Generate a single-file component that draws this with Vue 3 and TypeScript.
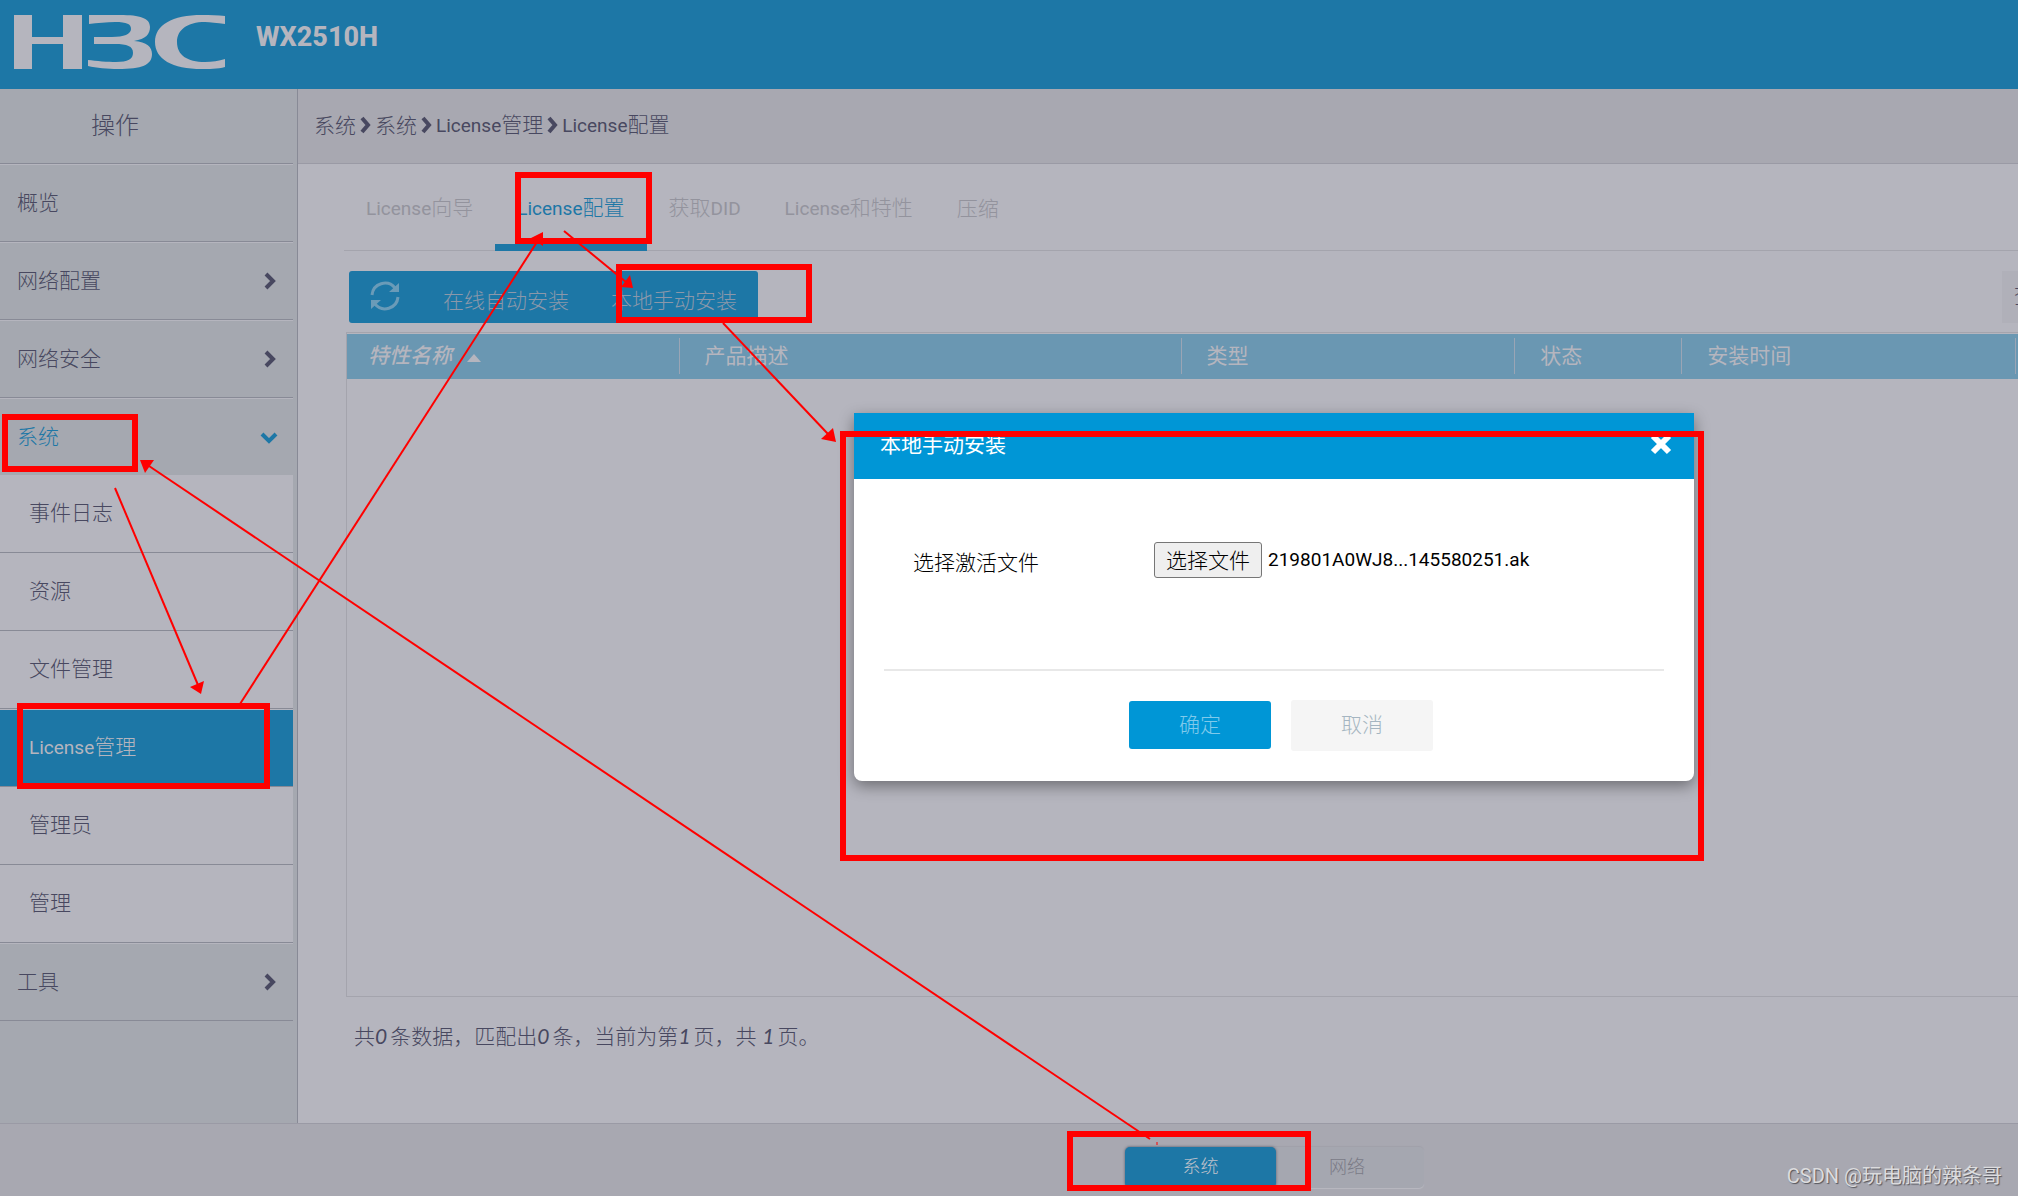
<script setup lang="ts">
import { ref } from 'vue'

interface TextRun {
  text: string
  latin?: boolean
}

interface NavItem {
  label: string
  latin?: string
  arrow?: boolean
  open?: boolean
  children?: NavItem[]
}

const nav: NavItem[] = [
  { label: '概览' },
  { label: '网络配置', arrow: true },
  { label: '网络安全', arrow: true },
  {
    label: '系统',
    arrow: true,
    open: true,
    children: [
      { label: '事件日志' },
      { label: '资源' },
      { label: '文件管理' },
      { label: '管理', latin: 'License' },
      { label: '管理员' },
      { label: '管理' },
    ],
  },
  { label: '工具', arrow: true },
]

const crumbs: TextRun[][] = [
  [{ text: '系统' }],
  [{ text: '系统' }],
  [{ text: 'License', latin: true }, { text: '管理' }],
  [{ text: 'License', latin: true }, { text: '配置' }],
]

const tabs: TextRun[][] = [
  [{ text: 'License', latin: true }, { text: '向导' }],
  [{ text: 'License', latin: true }, { text: '配置' }],
  [{ text: '获取' }, { text: 'DID', latin: true }],
  [{ text: 'License', latin: true }, { text: '和特性' }],
  [{ text: '压缩' }],
]
const activeTab = ref(1)

const columns = ['产品描述', '类型', '状态', '安装时间']

const picker = ref<HTMLInputElement | null>(null)
const fileName = ref('219801A0WJ8...145580251.ak')

function onPick(event: Event) {
  const file = (event.target as HTMLInputElement).files?.[0]
  if (file) fileName.value = file.name
}

const marks = [
  { x: 518, y: 175, w: 131, h: 66 },
  { x: 619, y: 267, w: 190, h: 53 },
  { x: 5, y: 417, w: 130, h: 52 },
  { x: 20, y: 706, w: 247, h: 80 },
  { x: 843, y: 434, w: 858, h: 424 },
  { x: 1070, y: 1134, w: 238, h: 54 },
]

const arrows = [
  { line: 'M115 488L198 685', head: '201,694 190,687 204,681' },
  { line: 'M240 704L537 242', head: '543,232 531,238 543,246' },
  { line: 'M564 231L626 282', head: '633,288 630,275 621,287' },
  { line: 'M723 323L828 434', head: '836,442 833,428 821,439' },
  { line: 'M1150 1139L149 466', head: '140,460 154,460 145,473' },
]
</script>

<template>
  <div class="page">
    <header class="banner">
      <svg class="logo" viewBox="0 0 212 56" role="img" aria-label="H3C">
        <path d="M0 0H18V22H49V0H68V54H49V29H18V54H0Z" />
        <path d="M75 0H106C126 0 136 3 136 12C136 19 132 24 120 26C133 27 138 32 138 39C138 50 128 54 104 54C94 54 82 53 74 51V45C82 46 94 47 102 47C114 47 119 44 119 38C119 31 113 29 101 29H80V22H98C110 22 117 19 117 14C117 9 113 7 101 7C93 7 83 8 75 9Z" />
        <path d="M211 1V9C203 8 196 7 191 7C173 7 163 15 163 27C163 40 173 47 191 47C198 47 205 46 211 44V52C204 54 194 54 188 54C158 54 141 44 141 27C141 10 158 0 188 0C196 0 204 0 211 1Z" />
      </svg>
      <h1 class="model">WX2510H</h1>
    </header>

    <div class="body">
      <nav class="side" aria-label="操作">
        <h2 class="side-title">操作</h2>
        <template v-for="item in nav" :key="item.label">
          <a href="#" class="nav-item" :class="{ open: item.open }">
            <span class="nav-text">{{ item.label }}</span>
            <svg v-if="item.arrow" class="chev" viewBox="0 0 18 18" aria-hidden="true">
              <path :d="item.open ? 'M2 6L9 13L16 6' : 'M6 2L13 9L6 16'" />
            </svg>
          </a>
          <div v-if="item.children" class="sub">
            <a
              v-for="child in item.children"
              :key="(child.latin ?? '') + child.label"
              href="#"
              class="sub-item"
              :class="{ current: child.latin }"
            ><span v-if="child.latin" class="latin">{{ child.latin }}</span>{{ child.label }}</a>
          </div>
        </template>
      </nav>

      <main class="main">
        <div class="crumbs">
          <template v-for="(crumb, i) in crumbs" :key="i">
            <svg v-if="i" class="crumb-sep" viewBox="0 0 11 20" aria-hidden="true"><path d="M2 3L8 10L2 17" /></svg>
            <a href="#"><span v-for="run in crumb" :key="run.text" :class="{ latin: run.latin }">{{ run.text }}</span></a>
          </template>
        </div>

        <div class="tabs" role="tablist">
          <button
            v-for="(tab, i) in tabs"
            :key="i"
            type="button"
            role="tab"
            class="tab"
            :class="{ active: i === activeTab }"
            :aria-selected="i === activeTab"
            @click="activeTab = i"
          ><span v-for="run in tab" :key="run.text" :class="{ latin: run.latin }">{{ run.text }}</span></button>
        </div>

        <div class="tools">
          <div class="toolbar">
            <button type="button" class="refresh" aria-label="刷新">
              <svg viewBox="0 0 32 32" aria-hidden="true">
                <path class="arc" d="M3 15A13 13 0 0 1 26 8M29 17A13 13 0 0 1 6 24" />
                <path class="tip" d="M30 3V12H20ZM2 29V20H12Z" />
              </svg>
            </button>
            <button type="button">在线自动安装</button>
            <button type="button">本地手动安装</button>
          </div>
          <button type="button" class="query">查询</button>
        </div>

        <section class="grid">
          <div class="grid-head">
            <table>
              <thead>
                <tr>
                  <th class="sorted" scope="col">
                    <span class="cell"><em>特性名称</em><svg class="sort" viewBox="0 0 14 8" aria-hidden="true"><path d="M7 0L14 8H0Z" /></svg></span>
                  </th>
                  <th v-for="(col, i) in columns" :key="col" scope="col" :class="'c' + i">
                    <span class="cell">{{ col }}</span>
                  </th>
                </tr>
              </thead>
            </table>
          </div>
        </section>

        <p class="summary">共<i>0</i>条数据，匹配出<i>0</i>条，当前为第<i>1</i>页，共 <i>1</i>页。</p>
      </main>
    </div>

    <footer class="foot">
      <div class="switch">
        <button type="button" class="on">系统</button>
        <button type="button">网络</button>
      </div>
    </footer>

    <section class="dialog" role="dialog" aria-label="本地手动安装">
      <header class="dialog-head">
        <span>本地手动安装</span>
        <button type="button" class="close" aria-label="关闭">
          <svg viewBox="0 0 22 22" aria-hidden="true"><path d="M3 3L19 19M19 3L3 19" /></svg>
        </button>
      </header>
      <div class="dialog-body">
        <label class="file-label" for="activation">选择激活文件</label>
        <input id="activation" ref="picker" class="file-input" type="file" @change="onPick" />
        <button type="button" class="pick" @click="picker?.click()">选择文件</button>
        <span class="file-name latin">{{ fileName }}</span>
      </div>
      <div class="dialog-foot">
        <button type="button" class="ok">确定</button>
        <button type="button" class="cancel">取消</button>
      </div>
    </section>

    <svg class="marks" aria-hidden="true">
      <rect v-for="m in marks" :key="m.x" :x="m.x" :y="m.y" :width="m.w" :height="m.h" />
      <g v-for="a in arrows" :key="a.line">
        <path :d="a.line" />
        <polygon :points="a.head" />
      </g>
      <path class="tick" d="M1157 1142V1145" />
    </svg>

    <span class="watermark">CSDN @玩电脑的辣条哥</span>
  </div>
</template>

<style>
body {
  margin: 0;
}
</style>

<style scoped>
.page {
  --blue: #1d77a6;
  --bright: #0096d6;
  --paper: #b5b5be;
  --side: #a5a8b0;
  --bar: #a8a8b1;
  --line: #888a96;
  --soft: #a4a4ad;
  --ink: #484860;
  position: relative;
  display: flex;
  flex-direction: column;
  min-height: 100vh;
  overflow: hidden;
  background: var(--paper);
  color: var(--ink);
  font: 300 21px/32px Lato, 'Noto Sans CJK SC', sans-serif;
}
.page *,
.page *::before {
  box-sizing: border-box;
}
button {
  margin: 0;
  padding: 0;
  border: 0;
  background: none;
  color: inherit;
  font: inherit;
}
a {
  color: inherit;
  text-decoration: none;
}
.latin {
  font-family: Roboto, sans-serif;
  font-size: 19px;
  font-weight: 400;
}

.banner {
  display: flex;
  height: 89px;
  padding: 15px 14px 0;
  background: var(--blue);
  color: var(--paper);
}
.logo {
  width: 212px;
  height: 56px;
  fill: currentColor;
}
.model {
  margin: 6px 0 0 30px;
  font: 800 27px/32px Roboto, sans-serif;
}

.body {
  display: flex;
  flex: 1;
}
.side {
  flex: none;
  width: 298px;
  padding-right: 4px;
  border-right: 1px solid var(--line);
  background: var(--side);
}
.side-title {
  height: 75px;
  margin: 0;
  padding: 20px 0 0 91px;
  border-bottom: 1px solid var(--line);
  font-size: 24px;
  font-weight: 300;
}
.nav-item {
  display: flex;
  align-items: center;
  justify-content: space-between;
  height: 78px;
  padding: 0 15px 0 17px;
  border-top: 1px solid var(--paper);
  border-bottom: 1px solid var(--line);
}
.nav-text {
  padding-bottom: 2px;
}
.nav-item.open {
  height: 77px;
  border-bottom-color: var(--side);
  color: var(--blue);
}
.chev {
  width: 18px;
  height: 18px;
  fill: none;
  stroke: currentColor;
  stroke-width: 4;
}
.sub-item {
  display: block;
  height: 78px;
  padding: 21px 0 0 29px;
  border-bottom: 1px solid var(--line);
  background: var(--paper);
}
.sub-item.current {
  border-top: 1px solid var(--paper);
  padding-top: 20px;
  background: var(--blue);
  color: var(--paper);
}

.main {
  flex: 1;
  min-width: 0;
}
.crumbs {
  display: flex;
  align-items: center;
  gap: 4px;
  height: 75px;
  padding: 0 16px 2px;
  border-bottom: 1px solid #9a9aa5;
  background: var(--bar);
}
.crumb-sep {
  width: 11px;
  height: 20px;
  fill: none;
  stroke: currentColor;
  stroke-width: 4;
}
.tabs {
  display: flex;
  height: 87px;
  margin-left: 46px;
  border-bottom: 1px solid var(--soft);
  color: #93939d;
}
.tab {
  height: 87px;
  padding: 7px 22px 0;
  border-bottom: 7px solid transparent;
}
.tab.active {
  border-bottom-color: var(--blue);
  color: var(--blue);
}

.tools {
  display: flex;
  justify-content: space-between;
  padding: 20px 0 9px 51px;
}
.toolbar {
  display: flex;
  gap: 42px;
  height: 52px;
  padding: 6px 21px 0 20px;
  border-radius: 3px;
  background: var(--blue);
  color: #8b98aa;
}
.refresh {
  width: 32px;
  height: 38px;
}
.refresh svg {
  display: block;
  width: 32px;
  height: 32px;
}
.arc {
  fill: none;
  stroke: #6a9bb8;
  stroke-width: 3;
}
.tip {
  fill: #6a9bb8;
}
.query {
  flex: none;
  width: 66px;
  height: 52px;
  margin-right: -50px;
  padding-bottom: 4px;
  background: #b0b0b9;
}

.grid {
  height: 665px;
  margin-left: 48px;
  padding-top: 1px;
  border: solid var(--soft);
  border-width: 1px 0 1px 1px;
}
.grid-head {
  padding-right: 2px;
  background: #6a97b2;
}
table {
  width: 100%;
  table-layout: fixed;
  border-collapse: collapse;
  color: var(--paper);
}
th {
  width: 20%;
  height: 45px;
  padding: 4px 0 5px;
  font-weight: 400;
  text-align: left;
}
th.sorted {
  width: auto;
}
th.c0 {
  width: 502px;
}
th.c2 {
  width: 10%;
}
.cell {
  display: flex;
  align-items: center;
  height: 36px;
  padding: 0 0 2px 25px;
  border-right: 1px solid #9aa5b5;
}
.sorted .cell {
  padding-left: 21px;
}
.sorted em {
  font-weight: 500;
}
.sort {
  width: 14px;
  height: 8px;
  margin: 5px 0 0 15px;
  fill: currentColor;
}
.summary {
  margin: 23px 0 71px 56px;
}
.summary i {
  margin-right: 3px;
  font-weight: 400;
}

.foot {
  height: 73px;
  padding: 23px 0 0 1125px;
  border-top: 1px solid #9a9aa5;
  background: var(--bar);
}
.switch {
  display: flex;
  width: 299px;
  height: 41px;
  border-radius: 5px;
  background: #a5a7b0;
  box-shadow: 0 1px 1px #b8b8c1, 0 -1px 1px #a0a0aa;
  font-size: 18px;
}
.switch button {
  flex: 1;
  padding: 0 6px 3px 0;
  color: #7b7b87;
}
.switch .on {
  flex: 0 0 151px;
  padding-right: 0;
  border-radius: 5px;
  background: var(--blue);
  box-shadow: 0 0 3px #555b6b;
  color: #c0c2cb;
}

.dialog {
  position: absolute;
  top: 413px;
  left: 854px;
  width: 840px;
  border-radius: 0 0 8px 8px;
  background: #fff;
  box-shadow: 0 5px 15px rgba(0, 0, 0, 0.4);
  color: #000;
}
.dialog-head {
  display: flex;
  align-items: center;
  justify-content: space-between;
  height: 66px;
  padding: 0 22px 4px 26px;
  background: var(--bright);
  color: #fff;
  font-weight: 400;
}
.close {
  width: 22px;
  height: 22px;
}
.close svg {
  display: block;
  width: 22px;
  height: 22px;
  fill: none;
  stroke: #fff;
  stroke-width: 6;
}
.dialog-body {
  position: relative;
  display: flex;
  align-items: center;
  height: 192px;
  margin: 0 30px;
  padding: 0 29px 28px;
  border-bottom: 2px solid #e8e8e8;
}
.file-label {
  width: 241px;
  padding-top: 4px;
}
.file-input {
  position: absolute;
  width: 1px;
  height: 1px;
  opacity: 0;
}
.pick {
  width: 108px;
  height: 36px;
  border: 1px solid #767676;
  border-radius: 3px;
  background: #efefef;
}
.file-name {
  margin-left: 6px;
}
.dialog-foot {
  display: flex;
  align-items: center;
  justify-content: center;
  gap: 20px;
  height: 110px;
  padding: 0 0 2px 14px;
}
.ok,
.cancel {
  width: 142px;
  height: 48px;
  padding-bottom: 2px;
  border-radius: 3px;
}
.ok {
  background: var(--bright);
  color: #80caeb;
}
.cancel {
  height: 51px;
  background: #f5f5f5;
  color: #a5b5c1;
}

.marks {
  position: absolute;
  top: 0;
  left: 0;
  width: 100%;
  height: 100%;
  pointer-events: none;
}
.marks rect {
  fill: none;
  stroke: #f00;
  stroke-width: 6;
}
.marks path {
  fill: none;
  stroke: #f00;
  stroke-width: 2;
}
.marks polygon {
  fill: #f00;
}
.marks .tick {
  stroke-width: 1;
}
.watermark {
  position: absolute;
  right: 16px;
  bottom: 4px;
  color: #dcdcde;
  font: 400 20px/32px Roboto, 'Noto Sans CJK SC', sans-serif;
  text-shadow: 1px 1px 1px #55555c;
}
</style>
